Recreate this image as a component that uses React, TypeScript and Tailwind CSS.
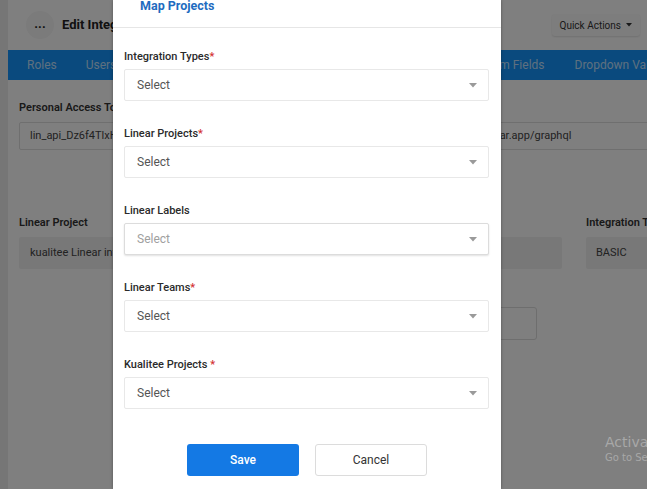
import React from 'react';

const Caret: React.FC = () => (
  <svg width="8" height="5" viewBox="0 0 8 5" className="shrink-0">
    <path d="M0 0 L8 0 L4 4.5 Z" fill="#9a9a9a" />
  </svg>
);

const SelectField: React.FC<{ label: string; required?: boolean; spaced?: boolean; muted?: boolean }> = ({
  label,
  required,
  spaced,
  muted,
}) => (
  <div className="flex flex-col">
    <div className="text-[11px] leading-[14px] font-medium text-[#2b2b2b]">
      {label}
      {required && <span className="text-[#d32f2f]">{spaced ? ' *' : '*'}</span>}
    </div>
    <div
      className={`mt-[5px] h-[32px] flex items-center justify-between pl-[12px] pr-[11px] bg-white border rounded-[2px] ${
        muted ? 'border-[#dcdcdc] shadow-[0_1px_2px_rgba(0,0,0,0.12)]' : 'border-[#e8e8e8]'
      }`}
    >
      <span className={`text-[12px] ${muted ? 'text-[#a0a0a0]' : 'text-[#555]'}`}>Select</span>
      <Caret />
    </div>
  </div>
);

const App: React.FC = () => {
  return (
    <div className="relative w-[647px] h-[489px] overflow-hidden bg-white font-['Roboto',sans-serif]">
      {/* Background page */}
      <div className="flex h-full">
        <div className="w-[8px] shrink-0 bg-[#ececec]" />
        <div className="flex-1 flex flex-col min-w-0">
          <div className="h-[50px] flex items-center pl-[18px] pr-[7px]">
            <div className="w-[28px] h-[28px] rounded-full bg-[#f6f6f6] flex items-center justify-center text-[#222] text-[13px] font-bold leading-none pb-[4px]">
              ...
            </div>
            <div className="ml-[8px] text-[13px] font-bold text-[#222]">Edit Integration</div>
            <div className="ml-auto h-[22px] px-[8px] flex items-center gap-[5px] bg-[#fbfbfb] rounded-[3px] shadow-[0_1px_2px_rgba(0,0,0,0.12)] text-[10px] text-[#333]">
              Quick Actions
              <svg width="6" height="4" viewBox="0 0 6 4">
                <path d="M0 0 L6 0 L3 3.5 Z" fill="#333" />
              </svg>
            </div>
          </div>
          <div className="h-[30px] bg-[#1494fc] flex items-center text-[12px] text-[#bfe0ff] whitespace-nowrap">
            <span className="ml-[19px]">Roles</span>
            <span className="ml-[29px]">Users</span>
            <span className="ml-[34px]">Projects</span>
            <span className="ml-[34px]">Integrations</span>
            <span className="ml-[34px]">Settings</span>
            <span className="ml-[98px]">Custom Fields</span>
            <span className="ml-[30px]">Dropdown Values</span>
          </div>
          <div className="pl-[11px] pt-[21px] flex flex-col">
            <div className="flex gap-[20px]">
              <div className="w-[379px] flex flex-col shrink-0">
                <div className="text-[11px] leading-[14px] font-semibold text-[#333]">Personal Access Token</div>
                <div className="mt-[7px] h-[28px] border border-[#dedede] rounded-[2px] flex items-center pl-[10px] text-[11px] text-[#444]">
                  lin_api_Dz6f4TlxHk29sd8f2jKx
                </div>
              </div>
              <div className="w-[300px] flex flex-col shrink-0">
                <div className="text-[11px] leading-[14px] font-semibold text-[#333]">API URL</div>
                <div className="mt-[7px] h-[28px] border border-[#dedede] rounded-[2px] flex items-center pl-[10px] text-[11px] text-[#444]">
                  https://api.linear.app/graphql
                </div>
              </div>
            </div>
            <div className="mt-[66px] flex gap-[24px]">
              <div className="w-[266px] shrink-0 flex flex-col">
                <div className="text-[11px] leading-[14px] font-semibold text-[#333]">Linear Project</div>
                <div className="mt-[7px] h-[32px] bg-[#f0f0f0] rounded-[2px] flex items-center pl-[11px] text-[11px] text-[#444] whitespace-nowrap overflow-hidden">
                  kualitee Linear integration
                </div>
              </div>
              <div className="w-[253px] shrink-0 flex flex-col">
                <div className="text-[11px] leading-[14px] font-semibold text-[#333]">Linear Team</div>
                <div className="mt-[7px] h-[32px] bg-[#f0f0f0] rounded-[2px]" />
              </div>
              <div className="w-[253px] shrink-0 flex flex-col">
                <div className="text-[11px] leading-[14px] font-semibold text-[#333]">Integration Type</div>
                <div className="mt-[7px] h-[32px] bg-[#f0f0f0] rounded-[2px] flex items-center pl-[10px] text-[11px] text-[#444]">
                  BASIC
                </div>
              </div>
            </div>
            <div className="mt-[38px] ml-[290px] w-[228px] h-[33px] border border-[#dcdcdc] rounded-[3px] bg-white" />
          </div>
        </div>
      </div>

      {/* Dim overlay */}
      <div className="absolute inset-0 bg-black/50" />

      {/* Modal */}
      <div className="absolute left-[113px] top-0 w-[388px] h-[489px] bg-white shadow-[0_0_3px_rgba(0,0,0,0.35)] flex flex-col">
        <div className="h-[28px] shrink-0 border-b border-[#e6e6e6] pl-[27px]">
          <div className="text-[12.5px] leading-[12px] font-bold text-[#1f6cc0]">Map Projects</div>
        </div>
        <div className="pt-[22px] pl-[11px] pr-[12px] flex flex-col gap-[26px]">
          <SelectField label="Integration Types" required />
          <SelectField label="Linear Projects" required />
          <SelectField label="Linear Labels" muted />
          <SelectField label="Linear Teams" required />
          <SelectField label="Kualitee Projects" required spaced />
        </div>
        <div className="mt-[35px] flex justify-center gap-[16px]">
          <button className="w-[112px] h-[32px] rounded-[3px] bg-[#1479e4] text-white text-[12px] font-medium">
            Save
          </button>
          <button className="w-[112px] h-[32px] rounded-[3px] bg-white border border-[#dcdcdc] text-[#333] text-[12px]">
            Cancel
          </button>
        </div>
      </div>

      {/* Windows watermark */}
      <div className="absolute left-[605px] top-[433px] whitespace-nowrap text-[#a8a8a8] pointer-events-none">
        <div className="text-[14px] leading-[18px] font-['DejaVu_Sans',sans-serif]">Activate Windows</div>
        <div className="text-[10px] leading-[14px] font-['DejaVu_Sans',sans-serif]">Go to Settings to activate Windows.</div>
      </div>
    </div>
  );
};

export default App;
